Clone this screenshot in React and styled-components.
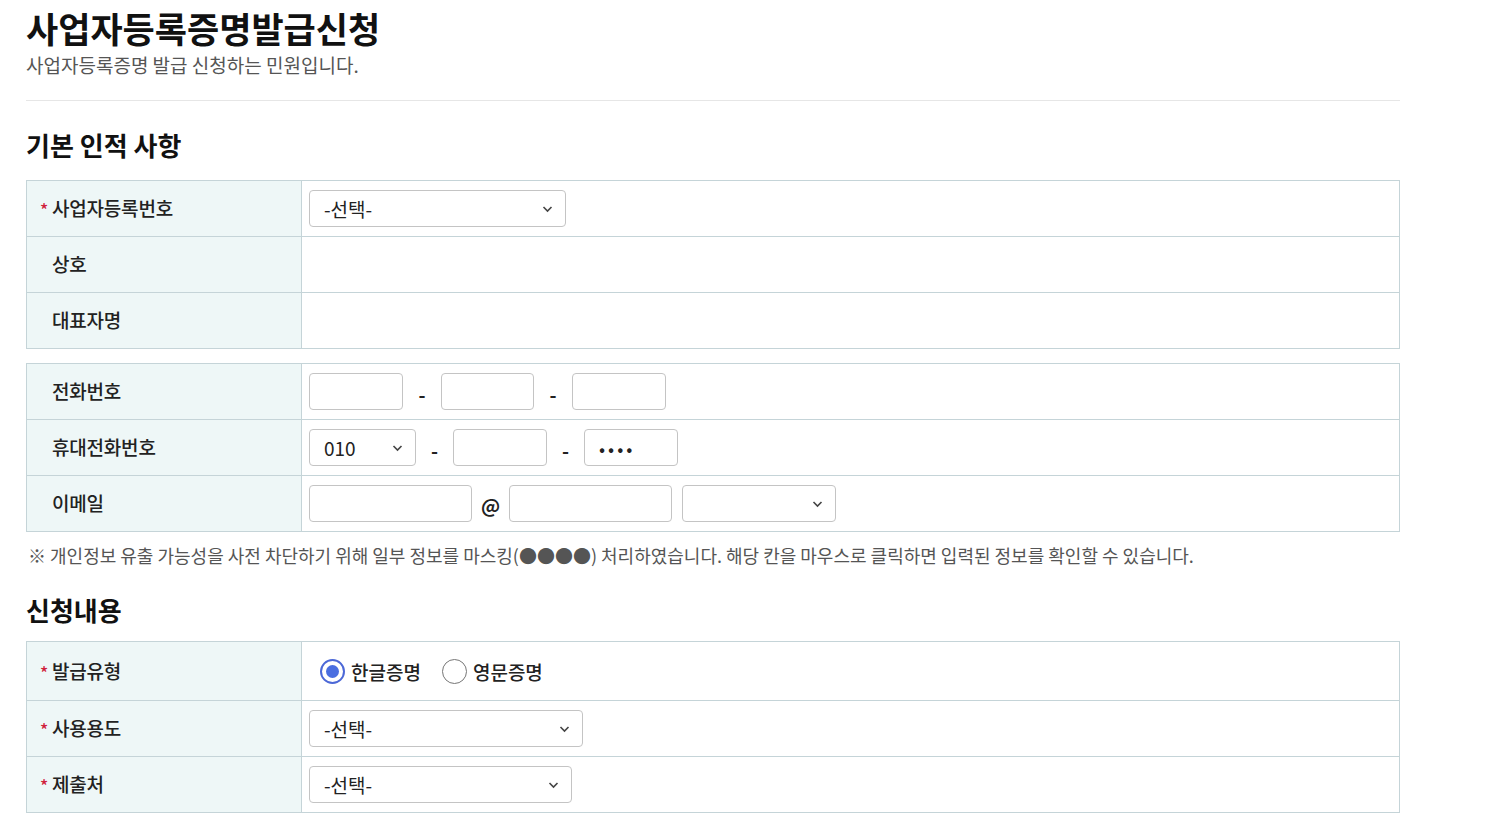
import React from "react";
import styled, { createGlobalStyle } from "styled-components";

const Global = createGlobalStyle`
  html, body { margin: 0; padding: 0; background: #fff; }
  body { font-family: "Noto Sans CJK KR", "Noto Sans", sans-serif; color: #111; }
  * { box-sizing: border-box; }
`;

const Page = styled.div`
  width: 1374px;
  margin-left: 26px;
  padding-top: 4px;
`;

const Title = styled.h1`
  margin: 0;
  font-size: 35px;
  font-weight: 700;
  line-height: 48px;
  color: #111;
`;

const Subtitle = styled.p`
  margin: 0;
  font-size: 19px;
  line-height: 26px;
  color: #555;
`;

const Divider = styled.hr`
  margin: 22px 0 0;
  border: 0;
  border-top: 1px solid #e6e6e6;
`;

const SectionTitle = styled.h2`
  margin: ${(p) => p.$top}px 0 0;
  font-size: 26px;
  font-weight: 700;
  line-height: 36px;
  color: #111;
`;

const Table = styled.div`
  margin-top: ${(p) => p.$top}px;
  border: 1px solid #c5d4d8;
  border-bottom: 0;
`;

const Row = styled.div`
  display: grid;
  grid-template-columns: 275px 1fr;
  height: ${(p) => p.$h || 56}px;
  border-bottom: 1px solid #c5d4d8;
`;

const Label = styled.div`
  display: flex;
  align-items: center;
  padding-left: 12px;
  background: #eef7f7;
  border-right: 1px solid #c5d4d8;
  font-size: 19px;
  font-weight: 500;
  letter-spacing: -0.2px;
  color: #222;
  padding-bottom: 2px;
`;

const Star = styled.span`
  display: inline-block;
  width: 13px;
  color: #d0213a;
  font-size: 17px;
  line-height: 1;
  padding-left: 1px;
  padding-top: 4px;
`;

const Spacer = styled.span`
  display: inline-block;
  width: 13px;
`;

const Cell = styled.div`
  display: flex;
  align-items: center;
  padding-left: 7px;
`;

const SelectBox = styled.div`
  position: relative;
  width: ${(p) => p.$w}px;
  height: 37px;
  border: 1px solid #c4c4c4;
  border-radius: 4px;
  display: flex;
  align-items: center;
  padding-left: 14px;
  font-size: 19px;
  color: #222;
  background: #fff;
  svg { position: absolute; right: 12px; top: 14px; }
`;

const TextBox = styled.div`
  width: ${(p) => p.$w}px;
  height: 37px;
  border: 1px solid #c4c4c4;
  border-radius: 4px;
  display: flex;
  align-items: center;
  padding-left: 14px;
  font-size: 18px;
  letter-spacing: 3px;
  color: #222;
  background: #fff;
`;

const Sep = styled.span`
  width: ${(p) => p.$w}px;
  text-align: center;
  font-size: 19px;
  font-weight: 700;
  color: #222;
  padding-top: ${(p) => p.$pt || 4}px;
`;

const Note = styled.p`
  margin: 11px 0 0 2px;
  font-size: 18px;
  line-height: 24px;
  color: #555;
`;

const RadioGroup = styled.div`
  display: flex;
  align-items: center;
  padding-left: 18px;
  gap: 21px;
`;

const RadioItem = styled.label`
  display: flex;
  align-items: center;
  gap: 6px;
  font-size: 19px;
  font-weight: 500;
  color: #222;
`;

const Circle = styled.span`
  width: 25px;
  height: 25px;
  border-radius: 50%;
  border: ${(p) => (p.$on ? "2px solid #4c68d7" : "1px solid #767676")};
  display: flex;
  align-items: center;
  justify-content: center;
  &::after {
    content: "";
    width: 13px;
    height: 13px;
    border-radius: 50%;
    background: ${(p) => (p.$on ? "#4a6ee0" : "transparent")};
  }
`;

const Chevron = () => (
  <svg width="11" height="8" viewBox="0 0 11 8">
    <path d="M1.5 2 L5.5 6 L9.5 2" fill="none" stroke="#444" strokeWidth="1.6" />
  </svg>
);

const Select = ({ w, children }) => (
  <SelectBox $w={w}>
    {children}
    <Chevron />
  </SelectBox>
);

const Req = ({ children }) => (
  <Label>
    <Star>*</Star>
    {children}
  </Label>
);

const Plain = ({ children }) => (
  <Label>
    <Spacer />
    {children}
  </Label>
);

export default function App() {
  return (
    <>
      <Global />
      <Page>
        <Title>사업자등록증명발급신청</Title>
        <Subtitle>사업자등록증명 발급 신청하는 민원입니다.</Subtitle>
        <Divider />
        <SectionTitle $top={26}>기본 인적 사항</SectionTitle>
        <Table $top={17}>
          <Row>
            <Req>사업자등록번호</Req>
            <Cell>
              <Select w={257}>-선택-</Select>
            </Cell>
          </Row>
          <Row>
            <Plain>상호</Plain>
            <Cell />
          </Row>
          <Row>
            <Plain>대표자명</Plain>
            <Cell />
          </Row>
        </Table>
        <Table $top={14}>
          <Row>
            <Plain>전화번호</Plain>
            <Cell>
              <TextBox $w={94} />
              <Sep $w={38}>-</Sep>
              <TextBox $w={93} />
              <Sep $w={38}>-</Sep>
              <TextBox $w={94} />
            </Cell>
          </Row>
          <Row>
            <Plain>휴대전화번호</Plain>
            <Cell>
              <Select w={107}>010</Select>
              <Sep $w={37}>-</Sep>
              <TextBox $w={94} />
              <Sep $w={37}>-</Sep>
              <TextBox $w={94}>••••</TextBox>
            </Cell>
          </Row>
          <Row>
            <Plain>이메일</Plain>
            <Cell>
              <TextBox $w={163} />
              <Sep $w={37} $pt={2}>@</Sep>
              <TextBox $w={163} />
              <Sep $w={10} />
              <Select w={154} />
            </Cell>
          </Row>
        </Table>
        <Note>
          ※ 개인정보 유출 가능성을 사전 차단하기 위해 일부 정보를 마스킹(●●●●) 처리하였습니다. 해당 칸을 마우스로 클릭하면 입력된 정보를 확인할 수 있습니다.
        </Note>
        <SectionTitle $top={25}>신청내용</SectionTitle>
        <Table $top={13}>
          <Row $h={59}>
            <Req>발급유형</Req>
            <RadioGroup>
              <RadioItem>
                <Circle $on />
                한글증명
              </RadioItem>
              <RadioItem>
                <Circle />
                영문증명
              </RadioItem>
            </RadioGroup>
          </Row>
          <Row>
            <Req>사용용도</Req>
            <Cell>
              <Select w={274}>-선택-</Select>
            </Cell>
          </Row>
          <Row>
            <Req>제출처</Req>
            <Cell>
              <Select w={263}>-선택-</Select>
            </Cell>
          </Row>
        </Table>
      </Page>
    </>
  );
}
